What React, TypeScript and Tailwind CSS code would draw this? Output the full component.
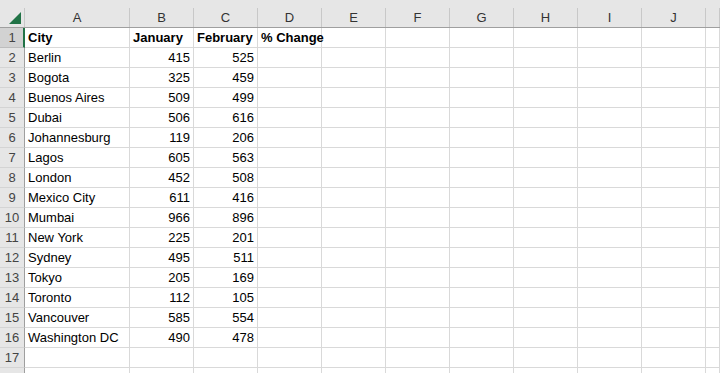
const cols = ["A", "B", "C", "D", "E", "F", "G", "H", "I", "J", "K"];

const rows: [string, string, string, string][] = [
  ["City", "January", "February", "% Change"],
  ["Berlin", "415", "525", ""],
  ["Bogota", "325", "459", ""],
  ["Buenos Aires", "509", "499", ""],
  ["Dubai", "506", "616", ""],
  ["Johannesburg", "119", "206", ""],
  ["Lagos", "605", "563", ""],
  ["London", "452", "508", ""],
  ["Mexico City", "611", "416", ""],
  ["Mumbai", "966", "896", ""],
  ["New York", "225", "201", ""],
  ["Sydney", "495", "511", ""],
  ["Tokyo", "205", "169", ""],
  ["Toronto", "112", "105", ""],
  ["Vancouver", "585", "554", ""],
  ["Washington DC", "490", "478", ""],
  ["", "", "", ""],
  ["", "", "", ""],
];

function colWidth(i: number) {
  if (i === 0) return "w-[105px]";
  if (i === 10) return "flex-1";
  return "w-[64px]";
}

export default function App() {
  return (
    <div className="h-[373px] w-[720px] overflow-hidden bg-white font-['Liberation_Sans',Arial,sans-serif] text-[13px] text-black">
      {/* column headers */}
      <div className="flex h-[28px] border-b border-[#9f9f9f] bg-[#e6e6e6]">
        <div className="relative w-[25px] shrink-0 pt-[8px]">
          <div className="h-full border-r border-[#c8c8c8]" />
          <svg className="absolute left-[9px] top-[12px]" width="12" height="12" viewBox="0 0 12 12">
            <polygon points="12,0 12,12 0,12" fill="#217346" />
          </svg>
        </div>
        {cols.map((c, i) => (
          <div key={c} className={`${colWidth(i)} shrink-0 pt-[8px]`}>
            <div className="flex h-full items-center justify-center border-r border-[#c8c8c8] text-[#333]">
              {i < 10 ? c : ""}
            </div>
          </div>
        ))}
      </div>

      {rows.map((r, ri) => (
        <Row key={ri} n={ri + 1} cells={r} />
      ))}
    </div>
  );
}

function Row({ n, cells }: { n: number; cells: [string, string, string, string] }) {
  const header = n === 1;
  // row 18 only peeks in at the bottom edge, its number is out of view
  const label = n <= 17 ? n : "";
  return (
    <div className="flex h-[20px]">
      <div
        className={
          header
            ? "flex w-[25px] shrink-0 items-center justify-center border-b border-r-2 border-b-[#bdbdbd] border-r-[#217346] bg-[#d2d2d2] pl-[1px] text-[#444]"
            : "flex w-[25px] shrink-0 items-center justify-center border-b border-r border-b-[#d4d4d4] border-r-[#9f9f9f] bg-[#e6e6e6] text-[#444]"
        }
      >
        {label}
      </div>
      {cols.map((c, i) => {
        const v = i < 4 ? cells[i] : "";
        const right = i > 0 && i < 3 && !header;
        return (
          <div
            key={c}
            className={`${colWidth(i)} flex shrink-0 items-center whitespace-nowrap border-b border-r border-[#d9d9d9] px-[3px] ${
              right ? "justify-end" : "justify-start"
            } ${header ? "font-bold" : ""} ${i === 1 && header ? "justify-end" : ""} ${
              i === 3 ? "overflow-visible" : "overflow-hidden"
            }`}
          >
            {v}
          </div>
        );
      })}
    </div>
  );
}
